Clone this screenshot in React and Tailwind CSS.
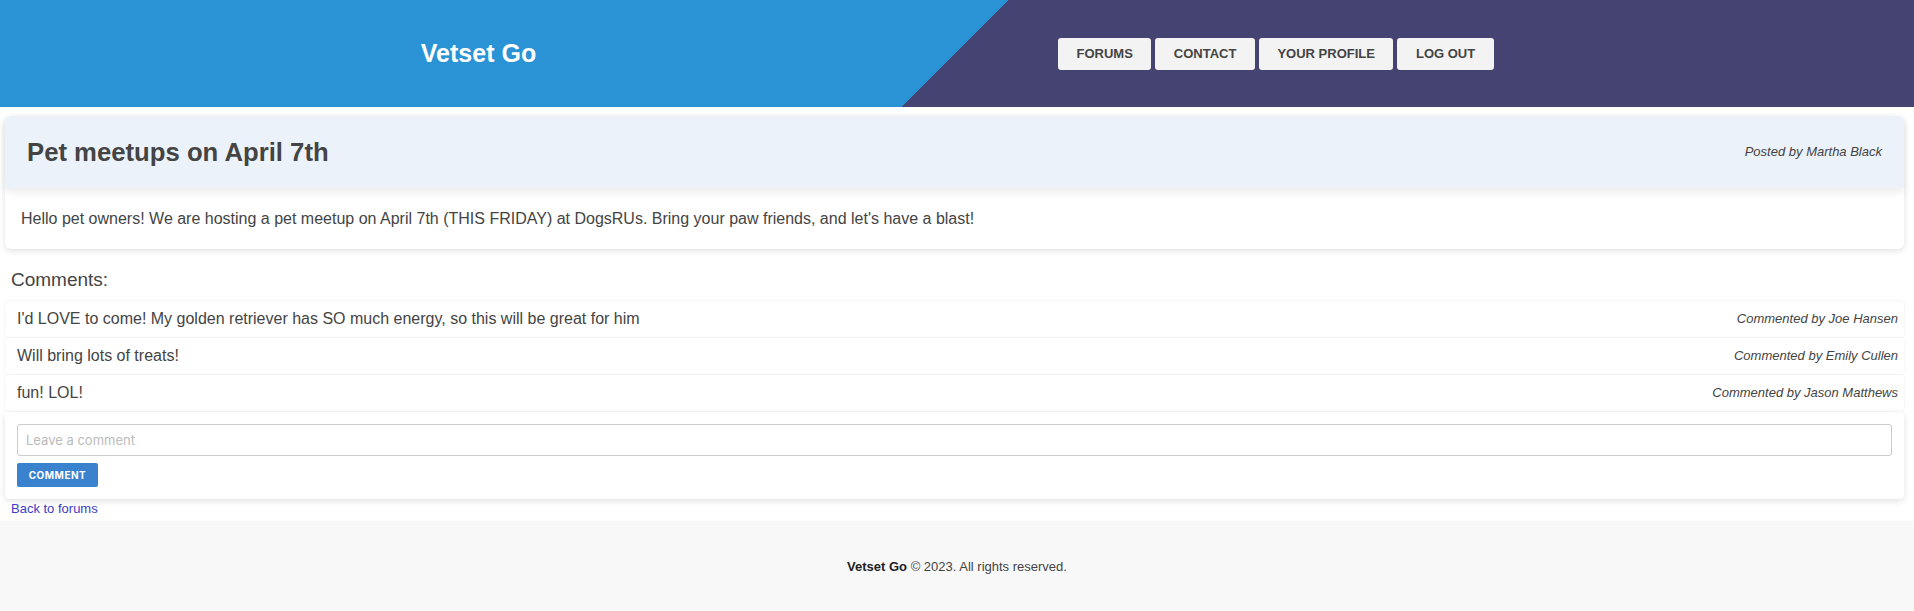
import React from 'react';

const comments = [
  { text: "I'd LOVE to come! My golden retriever has SO much energy, so this will be great for him", author: 'Joe Hansen' },
  { text: 'Will bring lots of treats!', author: 'Emily Cullen' },
  { text: 'fun! LOL!', author: 'Jason Matthews' },
];

const navItems = ['FORUMS', 'CONTACT', 'YOUR PROFILE', 'LOG OUT'];

export default function App() {
  return (
    <div className="min-h-[611px] bg-white font-['Liberation_Sans',Arial,sans-serif] text-[#444]">
      <header className="grid h-[107px] grid-cols-2 items-center bg-[linear-gradient(135deg,#2a93d5_713px,#444371_713px)]">
        <div className="text-center text-[25px] font-bold text-white">Vetset Go</div>
        <nav className="flex gap-[4px] pl-[101px]">
          {navItems.map((item) => (
            <button
              key={item}
              className="h-[32px] rounded-[3px] bg-[#f3f3f3] px-[18.5px] text-[13px] font-bold text-[#444]"
            >
              {item}
            </button>
          ))}
        </nav>
      </header>

      <main className="pl-[5px] pr-[10px] pt-[9px]">
        <div className="rounded-md bg-white shadow-[0_2px_6px_rgba(0,0,0,0.12)]">
          <div className="flex h-[72px] items-center justify-between rounded-t-md bg-[#ebf2fa] px-[22px] shadow-[0_4px_8px_rgba(0,0,0,0.08)]">
            <h1 className="text-[25.7px] font-bold text-[#444]">Pet meetups on April 7th</h1>
            <span className="text-[13px] italic text-[#444]">Posted by Martha Black</span>
          </div>
          <p className="flex h-[61px] items-center px-[16px] text-[16px] text-[#444]">
            Hello pet owners! We are hosting a pet meetup on April 7th (THIS FRIDAY) at DogsRUs. Bring your paw friends, and let's have a blast!
          </p>
        </div>

        <h2 className="pl-[6px] pt-[19px] pb-[9px] text-[19px] leading-[24px] text-[#444]">Comments:</h2>

        <div className="flex flex-col gap-[1px]">
          {comments.map((c) => (
            <div
              key={c.author}
              className="flex h-[36px] items-center justify-between rounded-[4px] bg-white pl-[12px] pr-[6px] shadow-[0_0_3px_rgba(0,0,0,0.08)]"
            >
              <span className="text-[16px] text-[#444]">{c.text}</span>
              <span className="text-[13px] italic text-[#444]">Commented by {c.author}</span>
            </div>
          ))}
          <div className="rounded-[4px] bg-white px-[12px] pt-[12px] pb-[12px] shadow-[0_2px_6px_rgba(0,0,0,0.12)]">
            <input
              placeholder="Leave a comment"
              className="block h-[32px] w-full rounded-[3px] border border-[#ccc] px-[8px] font-['Inter',sans-serif] text-[13px] placeholder:text-[#bbb] outline-none"
            />
            <button className="mt-[7px] h-[24px] w-[81px] rounded-[2px] bg-[#3a82ce] font-['Inter',sans-serif] text-[10px] font-bold tracking-[0.5px] text-white">
              COMMENT
            </button>
          </div>
        </div>

        <a className="block pl-[6px] pt-[2px] pb-[4px] text-[13px] leading-[16px] text-[#3c3cc6]">Back to forums</a>
      </main>

      <footer className="flex h-[91px] items-center justify-center bg-[#f8f8f8] text-[13px] text-[#444]">
        <span>
          <b className="text-[#222]">Vetset Go</b> © 2023. All rights reserved.
        </span>
      </footer>
    </div>
  );
}
